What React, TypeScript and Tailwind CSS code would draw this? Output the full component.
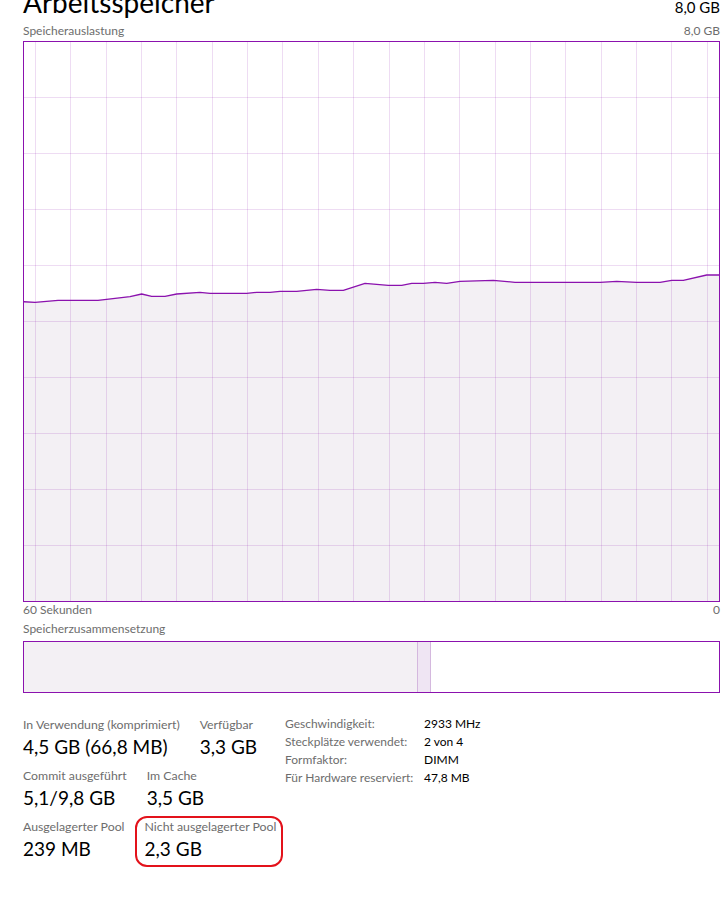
const pts: [number, number][] = [
  [23, 301.7], [35, 302.3], [58, 300.3], [98, 300.3], [130, 296.7], [141.7, 294], [151.7, 296.3],
  [165, 296.3], [176.7, 294], [200, 292.3], [210, 293.3], [246.7, 293.3], [256.7, 292.3],
  [270, 292.3], [280, 291.3], [296.7, 291.3], [316.7, 289.3], [330, 290.3], [343.3, 290.3],
  [365, 283.3], [388.3, 285.3], [401.7, 285.3], [411.7, 283.3], [423.3, 283.3], [435, 282.3],
  [446.7, 283.3], [460, 281.3], [493.3, 280.3], [515, 282.3], [600, 282.3], [616.7, 281.3],
  [636.7, 282.3], [660, 282.3], [671.7, 280.3], [683.3, 280.3], [706.7, 275], [719, 275],
];

const vLines = Array.from({ length: 20 }, (_, k) => Math.round(35 + 35.35 * k) + 0.5);
const hLines = Array.from({ length: 9 }, (_, k) => 97 + 56 * k + 0.5);

// Detailwerte rechts
const details: [string, string][] = [
  ["Geschwindigkeit:", "2933 MHz"],
  ["Steckplätze verwendet:", "2 von 4"],
  ["Formfaktor:", "DIMM"],
  ["Für Hardware reserviert:", "47,8 MB"],
];

type Stat = { label: string; value: string; marked?: boolean };

const rows: Stat[][] = [
  [
    { label: "In Verwendung (komprimiert)", value: "4,5 GB (66,8 MB)" },
    { label: "Verfügbar", value: "3,3 GB" },
  ],
  [
    { label: "Commit ausgeführt", value: "5,1/9,8 GB" },
    { label: "Im Cache", value: "3,5 GB" },
  ],
  [
    { label: "Ausgelagerter Pool", value: "239 MB" },
    { label: "Nicht ausgelagerter Pool", value: "2,3 GB", marked: true },
  ],
];

function UsageGraph() {
  const line = pts.map(([x, y], i) => `${i ? "L" : "M"}${x} ${y}`).join(" ");
  const area = `${line} L719 601 L23 601 Z`;
  return (
    <div className="mt-[2px] h-[561px] w-[697px] border border-[#8b12ae]">
      <svg width={695} height={559} viewBox="24 42 695 559" className="block">
        <path d={area} fill="#f3f0f4" />
        <g stroke="rgba(139,18,174,0.15)" strokeWidth={1} shapeRendering="crispEdges">
          {vLines.map((x) => (
            <line key={x} x1={x} y1={42} x2={x} y2={601} />
          ))}
          {hLines.map((y) => (
            <line key={y} x1={24} y1={y} x2={719} y2={y} />
          ))}
        </g>
        <path d={line} fill="none" stroke="#8b12ae" strokeWidth={1.3} strokeLinejoin="round" />
      </svg>
    </div>
  );
}

function StatBlock({ s }: { s: Stat }) {
  return (
    <div className="relative">
      {s.marked && (
        <div className="absolute -left-[10px] -top-[3px] h-[51px] w-[148px] rounded-[12px] border-2 border-[#e3121b]" />
      )}
      <div className="text-[12.3px] leading-[16px] text-[#6d6d6d]">{s.label}</div>
      <div className="mt-[2px] text-[19px] leading-[24px]">{s.value}</div>
    </div>
  );
}

export default function App() {
  return (
    <div className="h-[898px] w-[725px] overflow-hidden bg-white text-black font-['Lato','Segoe_UI',sans-serif]">
      <div className="-mt-[12px] ml-[23px] w-[697px]">
        <div className="flex h-[28px] items-baseline justify-between">
          <div className="text-[28px] leading-[28px]">Arbeitsspeicher</div>
          <div className="text-[15px] leading-[15px]">8,0 GB</div>
        </div>
        <div className="mt-[7px] flex justify-between text-[12px] leading-[16px] text-[#6d6d6d]">
          <span>Speicherauslastung</span>
          <span>8,0 GB</span>
        </div>

        <UsageGraph />

        <div className="flex justify-between text-[12px] leading-[16px] text-[#6d6d6d]">
          <span>60 Sekunden</span>
          <span>0</span>
        </div>
        <div className="mt-[3px] text-[12px] leading-[16px] text-[#6d6d6d]">Speicherzusammensetzung</div>
        <div className="mt-[4px] flex h-[52px] w-[697px] border border-[#8b12ae]">
          <div className="w-[394px] border-r border-[#d4b8de] bg-[#f3f0f4]" />
          <div className="w-[13px] border-r border-[#d4b8de] bg-[#efe5f3]" />
          <div className="flex-1 bg-white" />
        </div>

        <div className="mt-[24px] flex items-start">
          <div className="flex w-[262px] flex-col gap-[9px]">
            {rows.map((r, i) => (
              <div key={i} className="flex gap-5">
                {r.map((s) => (
                  <StatBlock key={s.label} s={s} />
                ))}
              </div>
            ))}
          </div>
          <div className="-mt-[2px] grid grid-cols-[139px_auto] text-[12px] leading-[18px]">
            {details.map(([k, v]) => (
              <div key={k} className="contents">
                <span className="text-[#6d6d6d]">{k}</span>
                <span>{v}</span>
              </div>
            ))}
          </div>
        </div>
      </div>
    </div>
  );
}
